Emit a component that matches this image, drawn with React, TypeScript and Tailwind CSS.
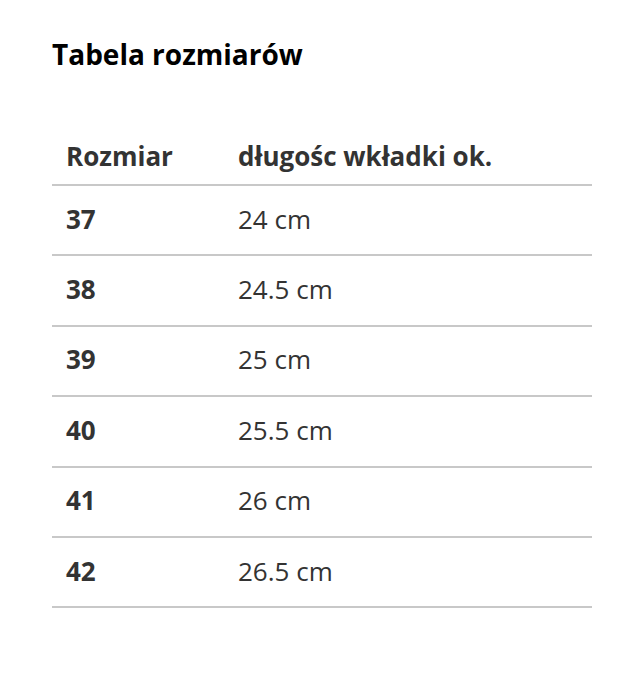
export default function App() {
  const rows = [
    ["37", "24 cm"],
    ["38", "24.5 cm"],
    ["39", "25 cm"],
    ["40", "25.5 cm"],
    ["41", "26 cm"],
    ["42", "26.5 cm"],
  ];

  return (
    <div
      className="w-[642px] h-[682px] bg-white px-[52px] pt-[36px]"
      style={{ fontFamily: '"Open Sans", sans-serif' }}
    >
      <h2 className="text-[28px] font-bold text-black leading-[36px]">
        Tabela rozmiarów
      </h2>

      <table className="mt-[58px] w-[540px] border-collapse text-[#333]">
        <thead>
          <tr className="border-b-2 border-[#c8c8c8]">
            <th className="h-[55px] pl-[14px] pb-[2px] w-[186px] text-left text-[26px] font-bold align-middle">
              Rozmiar
            </th>
            <th className="h-[55px] pb-[2px] text-left text-[26px] font-bold align-middle">
              długośc wkładki ok.
            </th>
          </tr>
        </thead>
        <tbody>
          {rows.map(([size, len]) => (
            <tr key={size} className="border-b-2 border-[#c8c8c8]">
              <td className="h-[70.4px] pl-[14px] pb-[2px] text-[26px] font-bold align-middle">
                {size}
              </td>
              <td className="h-[70.4px] pb-[2px] text-[26px] align-middle">{len}</td>
            </tr>
          ))}
        </tbody>
      </table>
    </div>
  );
}
